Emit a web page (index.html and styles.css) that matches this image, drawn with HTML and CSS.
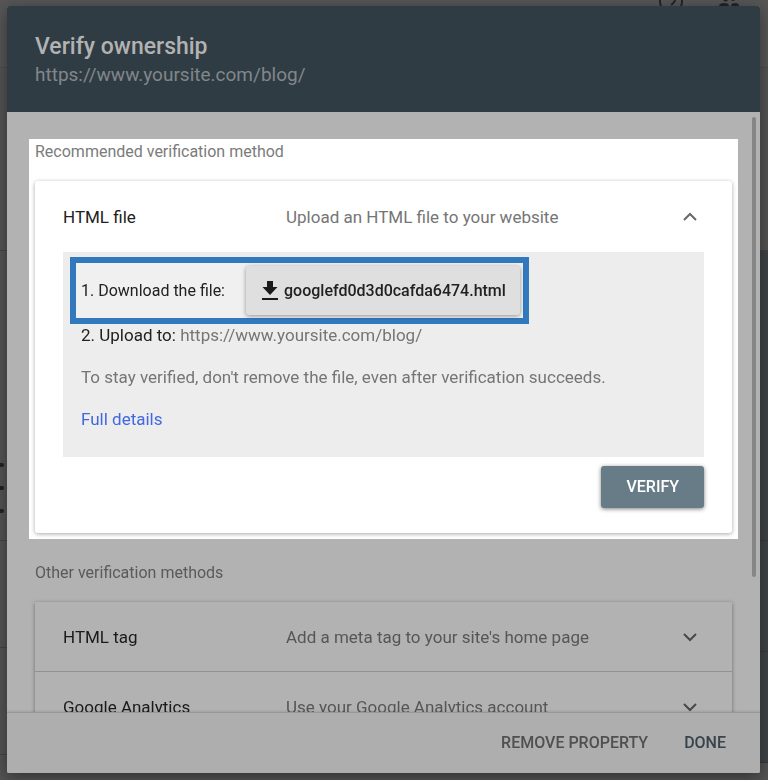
FILE: index.html
```html
<!DOCTYPE html>
<html lang="en">

<head>
    <meta charset="UTF-8">
    <meta name="viewport" content="width=device-width, initial-scale=1.0">
    <title>Verify ownership</title>
    <link rel="stylesheet" href="styles.css">
</head>

<body>
    <!-- page behind the dialog -->
    <div class="backdrop">
        <div class="topbar">
            <svg class="topbar-icon" width="26" height="6" viewBox="0 0 26 6" fill="none" stroke="#242424" stroke-width="2">
                <path d="M2 0v2q0 2 1 4M24 0v2q0 2-1 4M17 0q0 2-4 5" />
            </svg>
            <svg class="topbar-icon" width="22" height="6" viewBox="0 0 22 6" fill="#242424">
                <path d="M5 0h5q-2 3-5 0zM13 0h4q-2 2-4 0zM1 6q0-3 5-3t5 3zM13 6q0-3 4-3t4 3z" />
            </svg>
        </div>
        <div class="backdrop-main">
            <div class="rail">
                <div class="rail-top"></div>
                <div class="rail-menu">
                    <span class="dot"></span>
                    <span class="dot"></span>
                    <span class="dot"></span>
                </div>
                <div class="rail-item"></div>
                <div class="rail-item"></div>
            </div>
            <div class="panel">
                <div class="panel-top"></div>
                <div class="panel-dark"></div>
                <div class="panel-item"></div>
                <div class="panel-item"></div>
            </div>
        </div>
    </div>

    <div class="dialog" role="dialog" aria-labelledby="dialog-title">
        <header class="dialog-header">
            <h1 id="dialog-title">Verify ownership</h1>
            <p>https://www.yoursite.com/blog/</p>
        </header>

        <main class="dialog-body">
            <div class="scroll-thumb"></div>

            <section class="recommended">
                <h2>Recommended verification method</h2>
                <div class="card">
                    <button class="method" type="button" aria-expanded="true">
                        <span class="method-name">HTML file</span>
                        <span class="method-text">Upload an HTML file to your website</span>
                        <svg class="chevron" width="16" height="10" viewBox="0 0 16 10">
                            <path d="M2 8L8 2L14 8" />
                        </svg>
                    </button>
                    <div class="instructions">
                        <div class="download">
                            <span>1. Download the file:</span>
                            <button class="download-btn" type="button">
                                <svg width="18" height="22" viewBox="0 0 18 22" fill="#1a1a1a">
                                    <path d="M6 1h6v6h4.500L9 15L1.500 7H6zM1 18h16v2H1z" />
                                </svg>
                                googlefd0d3d0cafda6474.html
                            </button>
                        </div>
                        <p class="upload">2. Upload to: <span>https://www.yoursite.com/blog/</span></p>
                        <p class="note">To stay verified, don't remove the file, even after verification succeeds.</p>
                        <a class="details" href="#">Full details</a>
                    </div>
                    <div class="card-actions">
                        <button class="verify-btn" type="button">VERIFY</button>
                    </div>
                </div>
            </section>

            <section class="others">
                <h2>Other verification methods</h2>
                <div class="list">
                    <button class="method" type="button" aria-expanded="false">
                        <span class="method-name">HTML tag</span>
                        <span class="method-text">Add a meta tag to your site's home page</span>
                        <svg class="chevron" width="16" height="10" viewBox="0 0 16 10">
                            <path d="M2 2L8 8L14 2" />
                        </svg>
                    </button>
                    <button class="method" type="button" aria-expanded="false">
                        <span class="method-name">Google Analytics</span>
                        <span class="method-text">Use your Google Analytics account</span>
                        <svg class="chevron" width="16" height="10" viewBox="0 0 16 10">
                            <path d="M2 2L8 8L14 2" />
                        </svg>
                    </button>
                </div>
            </section>
        </main>

        <footer class="dialog-footer">
            <button class="text-btn" type="button">REMOVE PROPERTY</button>
            <button class="text-btn done" type="button">DONE</button>
        </footer>
    </div>
</body>

</html>
```

FILE: styles.css
```css
* {
    box-sizing: border-box;
}

body {
    font-family: Roboto, "Liberation Sans", sans-serif;
    font-size: 17px;
    line-height: 24px;
    color: #212121;
    background-color: #535353;
    height: 100vh;
    margin: 0;
    padding: 6px 8px 7px 7px;
    overflow: hidden;
}

h1,
h2,
p {
    margin: 0;
}

button {
    font: inherit;
    color: inherit;
    border: 0;
    background: none;
    cursor: pointer;
}

/* page behind */
.backdrop {
    position: fixed;
    inset: 0;
    display: flex;
    flex-direction: column;
    background-color: #535353;
}

.topbar {
    height: 68px;
    display: flex;
    justify-content: flex-end;
    align-items: flex-start;
    gap: 34px;
    padding-right: 28px;
    background-color: #565656;
    border-bottom: 1px solid #4c4c4c;
}

.backdrop-main {
    flex: 1;
    display: flex;
    justify-content: space-between;
}

.rail,
.panel {
    width: 50%;
    display: flex;
    flex-direction: column;
}

.rail-top,
.panel-top {
    height: 183px;
    border-bottom: 1px solid #444;
}

.rail-menu {
    height: 290px;
    display: flex;
    flex-direction: column;
    justify-content: flex-end;
    gap: 19px;
    padding-bottom: 27px;
    border-bottom: 1px solid #444;
}

.dot {
    width: 4px;
    height: 4px;
    border-radius: 0 2px 2px 0;
    background-color: #222;
}

.rail-item {
    height: 107px;
    border-bottom: 1px solid #444;
}

.panel-dark {
    height: 290px;
    background-color: #3e4346;
    border-bottom: 1px solid #35393b;
}

.panel-item {
    height: 111px;
    background-color: #3e4346;
    border-bottom: 1px solid #35393b;
}

/* dialog */
.dialog {
    position: relative;
    height: 100%;
    display: flex;
    flex-direction: column;
    background-color: #b2b2b2;
    border-radius: 2px;
    box-shadow: 0 4px 16px rgba(0, 0, 0, 0.4);
    overflow: hidden;
}

.dialog-header {
    padding: 28px 28px 22px;
    background-color: #303c44;
    color: #81878b;
    font-size: 19px;
    line-height: 30px;
}

.dialog-header h1 {
    font-size: 23px;
    font-weight: 500;
    line-height: 26px;
    color: #b2b2b2;
}

.dialog-body {
    position: relative;
    flex: 1;
    min-height: 0;
    padding: 27px 22px 0;
    overflow: hidden;
}

.scroll-thumb {
    position: absolute;
    top: 5px;
    right: 4px;
    width: 4px;
    height: 460px;
    border-radius: 2px;
    background-color: #868686;
}

h2 {
    font-size: 16px;
    font-weight: 400;
    line-height: 26px;
    color: #7b7b7b;
}

.recommended {
    padding: 0 6px 6px;
    background-color: #fff;
}

.card {
    margin-top: 16px;
    padding: 0 28px 25px;
    border-radius: 3px;
    box-shadow: 0 1px 4px rgba(0, 0, 0, 0.35);
}

.method {
    width: 100%;
    height: 71px;
    display: flex;
    align-items: center;
    padding: 0 6px 0 0;
    text-align: left;
}

.method-name {
    width: 223px;
}

.method-text {
    flex: 1;
    color: #757575;
}

.chevron {
    fill: none;
    stroke: #686868;
    stroke-width: 2;
}

.instructions {
    height: 205px;
    padding: 5px 7px;
    line-height: 22px;
    background-color: #ededed;
}

.download {
    width: fit-content;
    display: flex;
    align-items: center;
    gap: 21px;
    padding: 3px 3px 3px 5px;
    border: 6px solid #3178bd;
    background-color: #f0f0f0;
    font-size: 16px;
}

.download-btn {
    height: 49px;
    display: flex;
    align-items: center;
    gap: 5px;
    padding: 0 14px 0 15px;
    border-radius: 3px;
    background-color: #dfdfdf;
    box-shadow: 0 1px 4px rgba(0, 0, 0, 0.4);
    font-weight: 500;
}

.upload,
.note,
.details {
    padding: 0 11px;
}

.upload,
.note {
    margin-bottom: 20px;
}

.upload span,
.note {
    color: #757575;
}

.details {
    color: #4267e0;
    text-decoration: none;
}

.card-actions {
    display: flex;
    justify-content: flex-end;
    padding-top: 9px;
}

.verify-btn {
    height: 42px;
    padding: 0 25px;
    border-radius: 3px;
    background-color: #687c87;
    box-shadow: 0 1px 4px rgba(0, 0, 0, 0.5);
    color: #fff;
    font-size: 16px;
    font-weight: 500;
}

.others {
    padding: 21px 6px 0;
}

.others h2 {
    color: #5a5a5a;
}

.list {
    margin-top: 16px;
    box-shadow: 0 1px 4px rgba(0, 0, 0, 0.4);
}

.list .method {
    height: 70px;
    padding: 0 34px 0 28px;
    border-bottom: 1px solid #929292;
    color: #1a1a1a;
}

.list .method-text {
    color: #565656;
}

.list .chevron {
    stroke: #484848;
}

.dialog-footer {
    position: relative;
    height: 61px;
    display: flex;
    justify-content: flex-end;
    align-items: center;
    gap: 36px;
    padding: 0 34px;
    background-color: #aeaeae;
    border-top: 1px solid #989898;
    box-shadow: 0 -1px 2px rgba(0, 0, 0, 0.1);
}

.text-btn {
    padding: 0;
    color: #505050;
    font-size: 16px;
    font-weight: 500;
}

.done {
    color: #37434b;
}
```
